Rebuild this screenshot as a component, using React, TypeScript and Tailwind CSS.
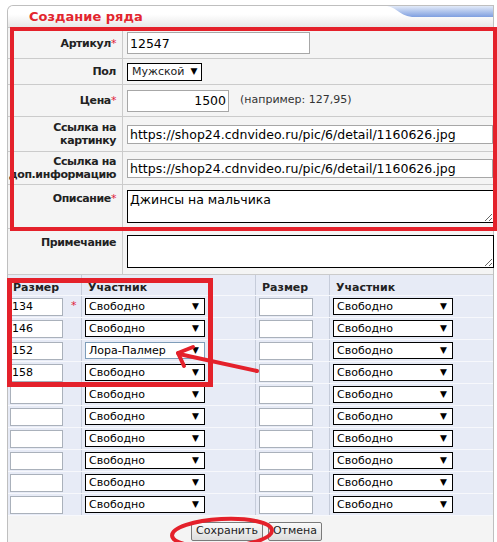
import * as React from 'react'

const font = "font-['DejaVu_Sans',Verdana,sans-serif]"

type Slot = { size?: string; star?: boolean; who?: string; focus?: boolean }

const leftSlots: Slot[] = [
  { size: '134', star: true },
  { size: '146' },
  { size: '152', who: 'Лора-Палмер', focus: true },
  { size: '158' },
  {}, {}, {}, {}, {}, {},
]

function FakeSelect({ value, width, focus }: { value: string; width: string; focus?: boolean }) {
  return (
    <div
      className={`${width} h-[17px] flex items-center justify-between bg-white border pl-[3px] pr-[5px] text-[11px] leading-none text-black ${
        focus ? 'border-[#7f9db9]' : 'border-black'
      }`}
    >
      <span>{value}</span>
      <span className="text-[9px]">▼</span>
    </div>
  )
}

function FormRow({
  label,
  star,
  height,
  top,
  children,
}: {
  label: React.ReactNode
  star?: boolean
  height: string
  top?: boolean
  children: React.ReactNode
}) {
  return (
    <div className={`flex ${height} border-b border-[#cbcbcb]`}>
      <div
        className={`w-[115px] shrink-0 border-r border-[#cbcbcb] pr-[6px] flex justify-end text-right text-[11px] font-bold leading-[13px] tracking-[-0.4px] whitespace-nowrap text-[#222] ${
          top ? 'items-start pt-[7px]' : 'items-center'
        }`}
      >
        <span>
          {label}
          {star && <span className="text-[#e0203a] font-normal">*</span>}
        </span>
      </div>
      <div className="flex-1 flex items-center pl-[4px]">{children}</div>
    </div>
  )
}

function SizeRow({ slot }: { slot: Slot }) {
  return (
    <div className="flex h-[22px] border-b border-[#f7f8fc]">
      <div className="w-[74px] shrink-0 border-r border-[#c6ccda] flex items-center pl-[2px]">
        <input
          readOnly
          defaultValue={slot.size ?? ''}
          className="w-[53px] h-[18px] bg-white border border-[#aab1bb] px-[1px] text-[11px] text-black outline-none"
        />
        {slot.star && <span className="ml-[8px] text-[11px] text-[#e0203a]">*</span>}
      </div>
      <div className="w-[174px] shrink-0 border-r border-[#c6ccda] flex items-center pl-[3px]">
        <FakeSelect value={slot.who ?? 'Свободно'} width="w-[120px]" focus={slot.focus} />
      </div>
      <div className="w-[74px] shrink-0 border-r border-[#c6ccda] flex items-center pl-[3px]">
        <input
          readOnly
          className="w-[54px] h-[18px] bg-white border border-[#aab1bb] text-[11px] outline-none"
        />
      </div>
      <div className="flex-1 flex items-center pl-[3px]">
        <FakeSelect value="Свободно" width="w-[120px]" />
      </div>
    </div>
  )
}

export default function App() {
  return (
    <div className={`relative w-[497px] h-[542px] overflow-hidden bg-white ${font}`}>
      <div className="ml-[7px] mt-[5px] w-[487px] border-t border-l border-r border-[#bfbfbf] rounded-tl-[6px]">
        {/* header */}
        <div className="h-[22px] rounded-tl-[6px] bg-linear-to-b from-white from-40% to-[#e8e8e8] border-b border-[#c4c4c4] flex items-center pl-[21px]">
          <span className="text-[13px] font-bold text-[#e3262e]">Создание ряда</span>
        </div>

        {/* main form */}
        <div className="bg-[#f4f4f4]">
          <FormRow label="Артикул" star height="h-[31px]">
            <input
              readOnly
              defaultValue="12547"
              className="w-[183px] h-[22px] bg-white border border-[#a7a7a7] px-[2px] text-[12.5px] text-black outline-none"
            />
          </FormRow>
          <FormRow label="Пол" height="h-[26px]">
            <div className="h-[18px] flex items-center gap-[6px] bg-white border border-black pl-[4px] pr-[4px] text-[11px] leading-none">
              <span className="text-[#222]">Мужской</span>
              <span className="text-[9px]">▼</span>
            </div>
          </FormRow>
          <FormRow label="Цена" star height="h-[32px]">
            <input
              readOnly
              defaultValue="1500"
              className="w-[102px] h-[22px] bg-white border border-[#a7a7a7] px-[2px] text-right text-[12.5px] text-black outline-none"
            />
            <span className="ml-[11px] text-[11px] text-[#333]">(например: 127,95)</span>
          </FormRow>
          <FormRow
            label={
              <>
                Ссылка на
                <br />
                картинку
              </>
            }
            height="h-[35px]"
          >
            <input
              readOnly
              defaultValue="https://shop24.cdnvideo.ru/pic/6/detail/1160626.jpg"
              className="w-[366px] h-[19px] bg-white border border-[#a7a7a7] px-[2px] text-[12.5px] text-black outline-none"
            />
          </FormRow>
          <FormRow
            label={
              <>
                Ссылка на
                <br />
                доп.информацию
              </>
            }
            height="h-[33px]"
          >
            <input
              readOnly
              defaultValue="https://shop24.cdnvideo.ru/pic/6/detail/1160626.jpg"
              className="w-[366px] h-[19px] bg-white border border-[#a7a7a7] px-[2px] text-[12.5px] text-black outline-none"
            />
          </FormRow>
          <FormRow label="Описание" star top height="h-[44px]">
            <textarea
              readOnly
              defaultValue="Джинсы на мальчика"
              className="block w-[367px] h-[33px] bg-white border border-black px-[2px] py-[1px] text-[12.5px] leading-[16px] text-black outline-none"
            />
          </FormRow>
          <FormRow label="Примечание" top height="h-[46px]">
            <textarea
              readOnly
              className="block w-[367px] h-[33px] bg-white border border-black outline-none"
            />
          </FormRow>
        </div>

        {/* sizes */}
        <div className="bg-[#e7ebf6] text-black">
          <div className="flex h-[5px]">
            <div className="w-[74px] border-r border-[#c6ccda]" />
            <div className="w-[174px] border-r border-[#c6ccda]" />
            <div className="w-[74px] border-r border-[#c6ccda]" />
            <div className="flex-1" />
          </div>
          <div className="flex h-[16px] border-b border-[#f7f8fc] text-[11px] font-bold text-[#222]">
            <div className="w-[74px] border-r border-[#c6ccda] pl-[5px]">Размер</div>
            <div className="w-[174px] border-r border-[#c6ccda] pl-[6px]">Участник</div>
            <div className="w-[74px] border-r border-[#c6ccda] pl-[6px]">Размер</div>
            <div className="flex-1 pl-[6px]">Участник</div>
          </div>
          {leftSlots.map((s, i) => (
            <SizeRow key={i} slot={s} />
          ))}
        </div>

        {/* buttons */}
        <div className="h-[40px] bg-[#f4f4f4] flex items-start pt-[6px] pl-[183px] gap-[5px]">
          <button className="h-[19px] px-[4px] border border-[#7a7a7a] rounded-[2px] bg-linear-to-b from-[#fafafa] to-[#dddddd] text-[11px] text-[#222]">
            Сохранить
          </button>
          <button className="h-[19px] px-[4px] border border-[#7a7a7a] rounded-[2px] bg-linear-to-b from-[#fafafa] to-[#dddddd] text-[11px] text-[#222]">
            Отмена
          </button>
        </div>
      </div>

      {/* blue tab decoration in the header's right corner */}
      <svg className="absolute left-[385px] top-[6px]" width="108" height="12" viewBox="0 0 108 12">
        <defs>
          <linearGradient id="tabGrad" x1="0" y1="0" x2="0" y2="1">
            <stop offset="0" stopColor="#e2eaf8" />
            <stop offset="1" stopColor="#7f9fe0" />
          </linearGradient>
        </defs>
        <path d="M0 0 C12 0 14 11 30 11 L108 11 L108 0 Z" fill="url(#tabGrad)" />
      </svg>

      {/* red annotations drawn over the screenshot */}
      <div className="absolute left-[10px] top-[27px] w-[487px] h-[204px] border-[4px] border-[#e4212b]" />
      <div className="absolute left-[7px] top-[278px] w-[206px] h-[109px] border-[5px] border-[#e4212b]" />
      <svg className="absolute inset-0 pointer-events-none" width="497" height="542" viewBox="0 0 497 542">
        <g stroke="#e4212b" strokeWidth="4" fill="none" strokeLinecap="round">
          <path d="M257 371 L179 354" />
          <path d="M178 353 L184 366" />
          <path d="M178 353 L193 347" />
          <ellipse cx="222" cy="533" rx="50" ry="14" transform="rotate(-3 222 533)" />
        </g>
      </svg>
    </div>
  )
}
